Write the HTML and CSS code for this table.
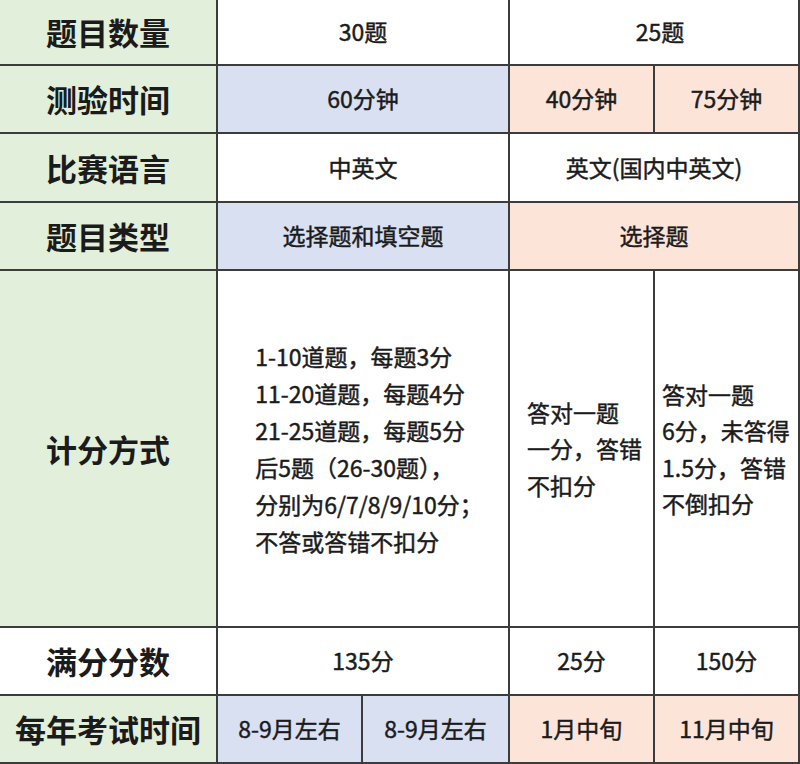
FILE: index.html
```html
<!DOCTYPE html>
<html lang="zh-CN">
<head>
<meta charset="utf-8">
<title>竞赛对比</title>
<link rel="stylesheet" href="styles.css">
</head>
<body>
<div class="sheet">
  <div class="cell label green">题目数量</div>
  <div class="cell span2 white">30题</div>
  <div class="cell span2 white shift">25题</div>

  <div class="cell label green">测验时间</div>
  <div class="cell span2 blue">60分钟</div>
  <div class="cell peach">40分钟</div>
  <div class="cell peach">75分钟</div>

  <div class="cell label green">比赛语言</div>
  <div class="cell span2 white">中英文</div>
  <div class="cell span2 white">英文(国内中英文)</div>

  <div class="cell label green">题目类型</div>
  <div class="cell span2 blue">选择题和填空题</div>
  <div class="cell span2 peach">选择题</div>

  <div class="cell label green">计分方式</div>
  <div class="cell span2 white rules">
    <div class="block">1-10道题，每题3分<br>11-20道题，每题4分<br>21-25道题，每题5分<br>后5题（26-30题），<br>分别为6/7/8/9/10分；<br>不答或答错不扣分</div>
  </div>
  <div class="cell white left wide-pad">
    <div class="block narrow">答对一题<br>一分，答错<br>不扣分</div>
  </div>
  <div class="cell white left">
    <div class="block narrow">答对一题<br>6分，未答得<br>1.5分，答错<br>不倒扣分</div>
  </div>

  <div class="cell label white">满分分数</div>
  <div class="cell span2 white">135分</div>
  <div class="cell white">25分</div>
  <div class="cell white">150分</div>

  <div class="cell label green">每年考试时间</div>
  <div class="cell blue">8-9月左右</div>
  <div class="cell blue">8-9月左右</div>
  <div class="cell peach">1月中旬</div>
  <div class="cell peach">11月中旬</div>
</div>
</body>
</html>
```

FILE: styles.css
```css
html, body {
  margin: 0;
  padding: 0;
  background: #ffffff;
}

body {
  width: 800px;
  height: 764px;
  overflow: hidden;
  font-family: "Noto Sans CJK SC", "Noto Sans", sans-serif;
  color: #1b1b1b;
}

.sheet {
  display: grid;
  grid-template-columns: 216px 143px 145px 143px 143px;
  grid-template-rows: 64px 66px 67px 66px 355px 66px 66px;
  gap: 2px;
  padding: 0 2px 2px 0;
  background: #3c3c3c;
  width: 800px;
  height: 764px;
  box-sizing: border-box;
}

.cell {
  display: flex;
  align-items: center;
  justify-content: center;
  font-size: 23px;
  font-weight: 400;
  line-height: 1.2;
  -webkit-text-stroke: 0.45px #1b1b1b;
  white-space: nowrap;
}

.span2 {
  grid-column: span 2;
}

.label {
  font-size: 31px;
  font-weight: 700;
  -webkit-text-stroke: 0;
}

.green { background: #e2efda; }
.blue { background: #d9e0f2; }
.peach { background: #fce4d8; }
.white { background: #ffffff; }

.block {
  text-align: left;
  line-height: 37px;
}

.narrow {
  line-height: 36.5px;
}

.rules {
  padding-left: 12px;
}

.shift {
  padding-left: 12px;
}

.left {
  justify-content: flex-start;
  padding-left: 7px;
}

.wide-pad {
  padding-left: 17px;
}
```
